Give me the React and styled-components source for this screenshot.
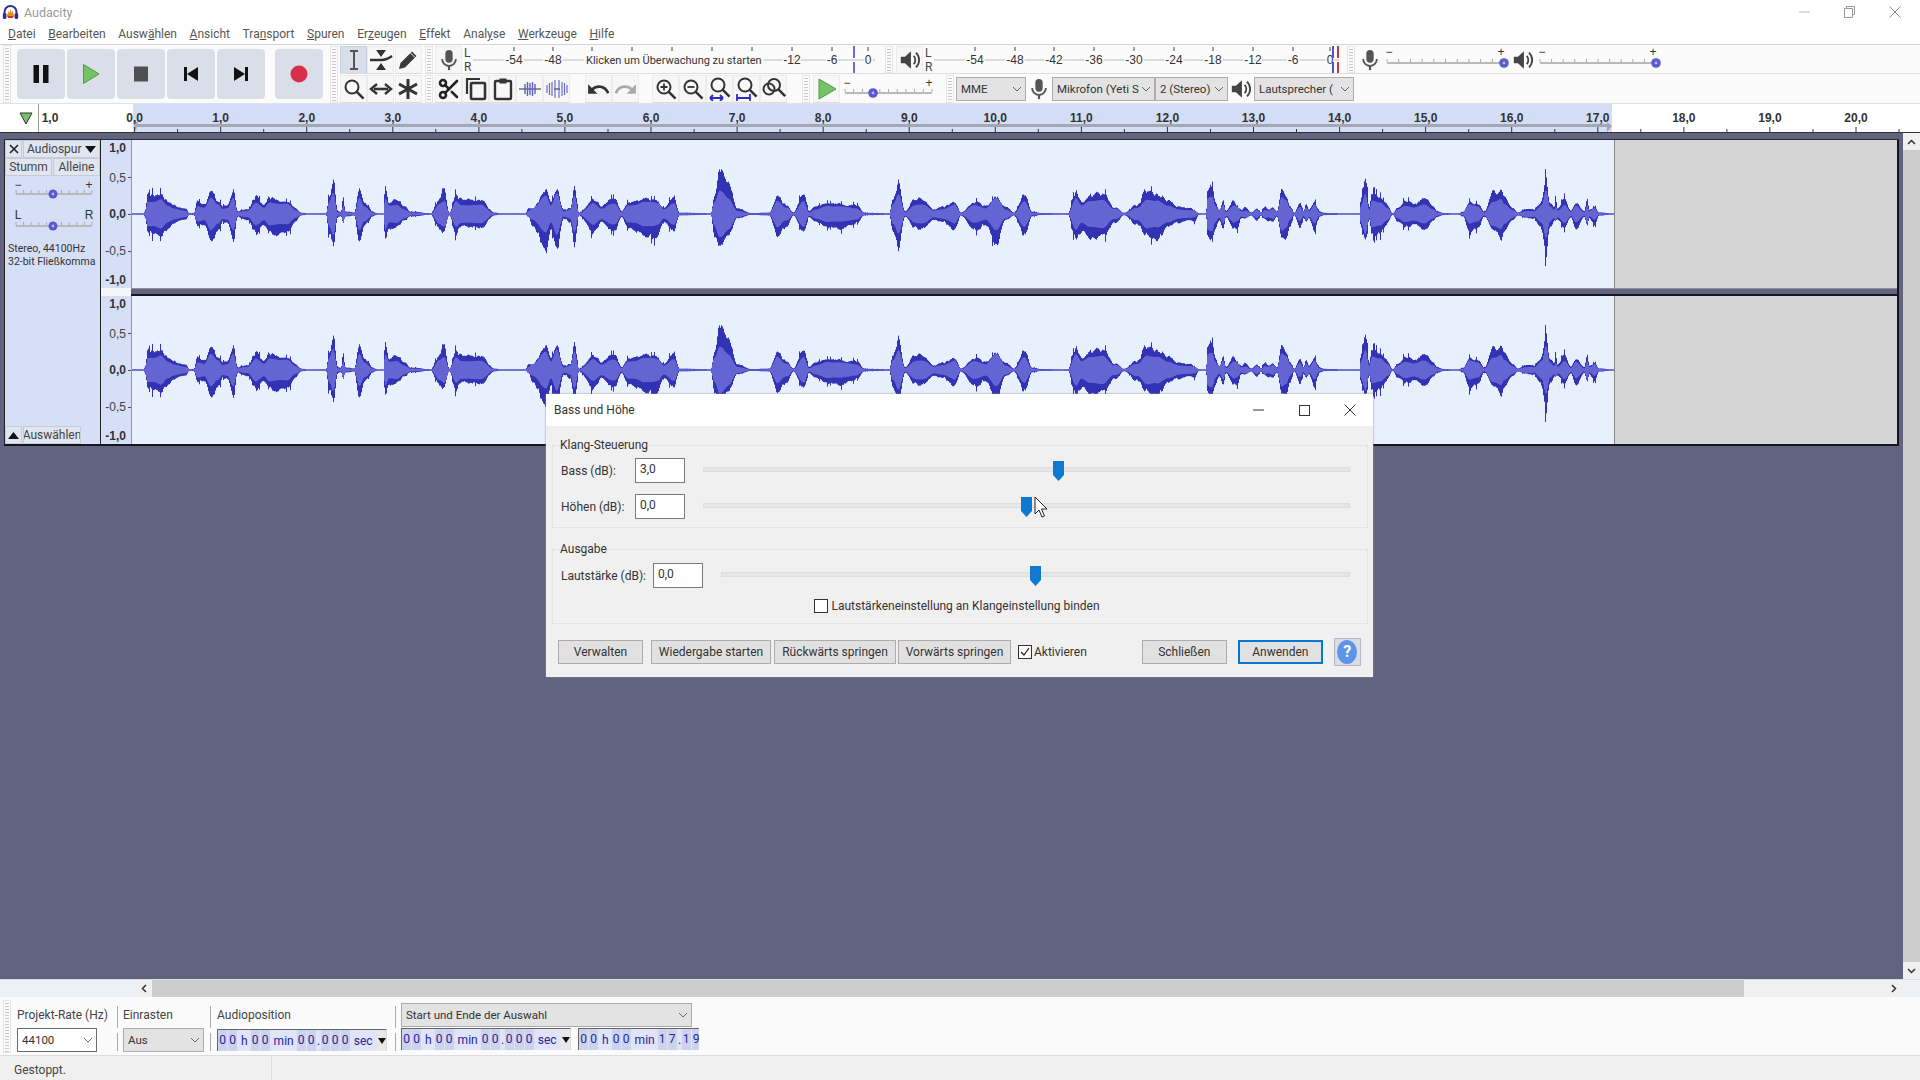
import { useMemo } from "react";
import styled, { createGlobalStyle } from "styled-components";
import { Scissors } from "lucide-react";
import { MdUndo, MdRedo } from "react-icons/md";

const GlobalStyle = createGlobalStyle`
  html, body { margin: 0; padding: 0; overflow: hidden; background: #62647f; }
  * { box-sizing: border-box; }
  body { font-family: Roboto, "Liberation Sans", sans-serif; font-size: 12px; color: #333; }
`;

const Page = styled.div`
  position: relative;
  width: 1920px;
  height: 1080px;
  display: flex;
  flex-direction: column;
  overflow: hidden;
`;

/* title + menu */
const TitleBar = styled.header`
  display: flex;
  flex: none;
  align-items: center;
  height: 24px;
  padding: 0 2px 0 2px;
  background: #fff;
  color: #9a9a9a;
  font-size: 12.5px;
`;
const TitleText = styled.span`
  margin-left: 5px;
`;
const WinButtons = styled.div`
  display: flex;
  margin-left: auto;
`;
const WinBtn = styled.div`
  width: ${(p) => p.$w || 45.5}px;
  height: 24px;
  display: flex;
  align-items: center;
  justify-content: center;
`;
const MenuBar = styled.nav`
  display: flex;
  flex: none;
  align-items: center;
  gap: 12.65px;
  height: 20px;
  padding-left: 8px;
  background: #fff;
  color: #555;
  font-size: 12px;
`;

/* top toolbars */
const Toolbars = styled.div`
  display: flex;
  flex: none;
  height: 60px;
  background: #fbfbfb;
  border-top: 1px solid #d4d4d4;
  border-bottom: 1px solid #e2e2e2;
`;
const Grip = styled.div`
  flex: none;
  width: 8px;
  margin-left: ${(p) => p.$ml || 0}px;
  border: 1px solid #e6e6e6;
  background: repeating-linear-gradient(to bottom, #c9c9c9 0 1px, transparent 1px 3px) 1px 2px / 4px 100% no-repeat;
`;
const Transport = styled.div`
  display: flex;
  flex: none;
  align-items: center;
  width: 330px;
  height: 100%;
  padding-left: 3px;
`;
const TransportGrip = styled(Grip)`
  align-self: stretch;
`;
const TransportBtn = styled.div`
  width: 48px;
  height: 50px;
  margin-left: ${(p) => p.$ml || 2}px;
  border-radius: 4px;
  background: #d9dee8;
  display: flex;
  align-items: center;
  justify-content: center;
`;
const ToolsGrid = styled.div`
  display: flex;
  flex: none;
  width: 94px;
  padding-top: 1px;
`;
const ToolCells = styled.div`
  display: grid;
  grid-template-columns: repeat(3, 27.3px);
  grid-template-rows: 28px 28px;
  row-gap: 1px;
  margin-left: 2px;
`;
const ToolBtn = styled.div`
  width: 27px;
  height: 28px;
  display: flex;
  align-items: center;
  justify-content: center;
  background: ${(p) => (p.$active ? "#d8dfeb" : "#f7f7f7")};
  border: 1px solid ${(p) => (p.$active ? "#c8cfdc" : "#ececec")};
  border-bottom-color: #dcdcdc;
  margin-left: ${(p) => p.$ml || 0}px;
  flex: none;
`;
const RightRows = styled.div`
  display: flex;
  flex-direction: column;
  flex: 1;
  margin-left: 1px;
`;
const BarRow = styled.div`
  display: flex;
  align-items: stretch;
  height: 29px;
  padding-top: 1px;
  border-bottom: ${(p) => (p.$last ? "none" : "1px solid #dedede")};
`;
const LR = styled.div`
  flex: none;
  width: ${(p) => p.$w}px;
  display: flex;
  flex-direction: column;
  justify-content: center;
  padding-left: 2px;
  color: #444;
  font-size: 12px;
  line-height: 14px;
`;
const IconSlot = styled.div`
  flex: none;
  width: ${(p) => p.$w}px;
  display: flex;
  align-items: center;
  justify-content: center;
`;
const Spacer = styled.div`
  flex: none;
  width: ${(p) => p.$w}px;
`;
const Combo = styled.div`
  flex: none;
  width: ${(p) => p.$w}px;
  height: 24px;
  margin-top: ${(p) => p.$mt ?? 2}px;
  display: flex;
  align-items: center;
  justify-content: space-between;
  gap: 1px;
  padding: 0 3px 0 4px;
  white-space: nowrap;
  overflow: hidden;
  background: ${(p) => (p.$white ? "#fff" : "#e3e3e3")};
  border: 1px solid ${(p) => (p.$white ? "#6c6c6c" : "#adadad")};
  color: #333;
  font-size: 11.5px;
`;
const ComboText = styled.span`
  overflow: hidden;
  flex: 1;
  min-width: 0;
`;
const MeterSvg = styled.svg`
  flex: none;
  display: block;
  text {
    font-family: "Liberation Sans", sans-serif;
    font-size: 12px;
    fill: #333;
    paint-order: stroke;
    stroke: #fbfbfb;
    stroke-width: 3px;
    text-anchor: middle;
  }
  text.msg {
    text-anchor: start;
    font-family: Roboto, sans-serif;
    font-size: 11px;
    stroke-width: 5px;
  }
`;
const SliderSvg = styled.svg`
  flex: none;
  display: block;
  text {
    font-family: "Liberation Sans", sans-serif;
    font-size: 12px;
    fill: #333;
    text-anchor: middle;
  }
`;

/* ruler */
const RulerSvg = styled.svg`
  display: block;
  flex: none;
  height: 29px;
  text {
    font-family: "Liberation Sans", sans-serif;
    font-size: 12px;
    font-weight: 700;
    fill: #333;
    text-anchor: middle;
  }
`;

/* work area */
const Workspace = styled.main`
  flex: 1;
  display: flex;
  background: #62647f;
  min-height: 0;
`;
const TrackArea = styled.div`
  flex: 1;
  padding: 6px 4px 0 4px;
`;
const Track = styled.div`
  display: flex;
  height: 307px;
  border-top: 1px solid #2b2b3a;
  border-bottom: 2px solid #15151f;
`;
const Panel = styled.aside`
  width: 97px;
  flex: none;
  display: flex;
  flex-direction: column;
  background: #d5dff6;
  border-left: 1px solid #222;
  border-right: 1px solid #222;
  font-size: 12px;
  color: #444;
`;
const PanelRow = styled.div`
  display: flex;
  height: 18px;
  gap: 1px;
`;
const PanelBtn = styled.div`
  flex: ${(p) => (p.$w ? `0 0 ${p.$w}px` : "1")};
  display: flex;
  align-items: center;
  justify-content: ${(p) => (p.$between ? "space-between" : "center")};
  padding: ${(p) => (p.$between ? "0 3px" : "0")};
  background: #e0e5ef;
  border: 1px solid #c6cbd6;
  white-space: nowrap;
  overflow: hidden;
`;
const PanelSliders = styled.div`
  padding-top: 2px;
  padding-left: 6px;
`;
const TrackInfo = styled.div`
  margin-top: 4px;
  padding-left: 3px;
  font-size: 10.5px;
  line-height: 13px;
  color: #333;
  white-space: nowrap;
`;
const PanelFoot = styled(PanelRow)`
  margin-top: auto;
`;
const Channels = styled.div`
  flex: 1;
  display: flex;
  flex-direction: column;
  border-right: 2px solid #15151f;
`;
const Channel = styled.div`
  display: flex;
  height: 148px;
`;
const VRulerSvg = styled.svg`
  flex: none;
  display: block;
  background: #d5dff6;
  border-right: 1px solid #8d97ad;
  text {
    font-family: "Liberation Sans", sans-serif;
    font-size: 12px;
    fill: #444;
    text-anchor: end;
  }
  text.bold {
    font-weight: 700;
    fill: #333;
  }
`;
const Wave = styled.svg`
  flex: none;
  display: block;
  background: #e8effd;
  border-right: 1px solid #8a8a8a;
`;
const DeadArea = styled.div`
  flex: 1;
  background: #d5d5d5;
`;
const ChannelGap = styled.div`
  height: 8px;
  display: flex;
  background: linear-gradient(#8d8f9d 0 1px, #62647f 1px 6px, #15151f 6px);
`;
const GapLeft = styled.div`
  width: 30px;
  background: #f4f6fc;
`;
const VScroll = styled.div`
  width: 17px;
  flex: none;
  display: flex;
  flex-direction: column;
  justify-content: space-between;
  background: #cdcdcd;
`;
const ScrollArrow = styled.div`
  width: ${(p) => p.$w || 17}px;
  height: 17px;
  flex: none;
  background: #f0f0f0;
  display: flex;
  align-items: center;
  justify-content: center;
`;

/* bottom */
const HScroll = styled.div`
  flex: none;
  height: 18px;
  display: flex;
  background: #eef0f8;
  border-top: 1px solid #d8dbe8;
`;
const HPad = styled.div`
  width: ${(p) => p.$w}px;
  flex: none;
`;
const HThumb = styled.div`
  width: 1592px;
  background: #cdcdcd;
`;
const HTrack = styled.div`
  flex: 1;
  background: #f0f0f0;
`;
const SelectionBar = styled.section`
  flex: none;
  height: 59px;
  display: flex;
  background: #fbfbfb;
  border-bottom: 1px solid #dcdcdc;
  padding: 6px 0 2px 3px;
`;
const SelectionGrip = styled(Grip)`
  margin-top: -3px;
`;
const SelCol = styled.div`
  flex: none;
  width: ${(p) => p.$w}px;
  margin-left: ${(p) => p.$ml}px;
  display: flex;
  flex-direction: column;
`;
const SelLabel = styled.div`
  height: 25px;
  line-height: 24px;
  color: #444;
  font-size: 12px;
  white-space: nowrap;
`;
const SelSep = styled.div`
  flex: none;
  align-self: stretch;
  margin: 3px 0 2px ${(p) => p.$ml}px;
  width: 1px;
  background: linear-gradient(#aaa 0 22px, transparent 22px 27px, #aaa 27px);
`;
const TimeRow = styled.div`
  display: flex;
  gap: 7px;
  margin-top: 1px;
`;
const TimeBox = styled.div`
  flex: none;
  width: ${(p) => p.$w}px;
  height: 22px;
  margin-top: ${(p) => p.$mt || 0}px;
  display: flex;
  align-items: center;
  overflow: hidden;
  white-space: nowrap;
  background: #e0e4f6;
  border-top: 1px solid #666;
  border-left: 1px solid #666;
  border-right: ${(p) => (p.$plain ? "none" : "1px solid #ddd")};
  color: #24249a;
  font-size: 12px;
`;
const Digit = styled.span`
  flex: none;
  width: 10px;
  height: 100%;
  line-height: 20px;
  text-align: center;
  background: #cdd3ec;
  border-right: 1px solid #e0e4f6;
`;
const Unit = styled.span`
  flex: none;
  padding: 0 3px;
`;
const Dot = styled.span`
  flex: none;
  width: 4px;
  text-align: center;
`;
const TimeArrow = styled.span`
  flex: none;
  margin-left: auto;
  width: 9px;
  height: 100%;
  background: #e8e8e8;
  display: flex;
  align-items: center;
  justify-content: center;
`;
const StatusBar = styled.footer`
  flex: none;
  height: 24px;
  display: flex;
  background: #f0f0f0;
  color: #444;
  font-size: 12px;
`;
const StatusCell = styled.div`
  width: 272px;
  padding: 7px 0 0 14px;
  border-right: 1px solid #dcdcdc;
`;

/* dialog */
const Dialog = styled.div`
  position: absolute;
  left: 546px;
  top: 394px;
  width: 827px;
  height: 283px;
  background: #f0f0f0;
  box-shadow: 0 0 2px #8b8b99;
  display: flex;
  flex-direction: column;
  color: #333;
  font-size: 12px;
`;
const DialogTitle = styled.div`
  flex: none;
  height: 32px;
  display: flex;
  align-items: center;
  padding-left: 8px;
  background: #fff;
  font-size: 12px;
`;
const DialogBody = styled.div`
  flex: 1;
  display: flex;
  flex-direction: column;
  padding: 11px 5px 0 6px;
`;
const Group = styled.fieldset`
  margin: 0 0 ${(p) => p.$mb || 0}px;
  padding: ${(p) => p.$pt}px 17px ${(p) => p.$pb}px 8px;
  border: 1px solid #e3e3e3;
  display: flex;
  flex-direction: column;
  gap: 11px;
  min-width: 0;
`;
const Legend = styled.legend`
  padding: 0;
  margin-left: -1px;
  height: 16px;
  line-height: 16px;
  font-size: 12px;
`;
const FieldRow = styled.div`
  display: flex;
  align-items: center;
  height: 25px;
`;
const FieldLabel = styled.label`
  flex: none;
  width: ${(p) => p.$w}px;
`;
const NumberInput = styled.input`
  flex: none;
  width: 50px;
  height: 25px;
  padding: 0 0 3px 4px;
  border: 1px solid #7a7a7a;
  background: #fff;
  font: inherit;
  color: #333;
  outline: none;
`;
const SliderTrack = styled.div`
  position: relative;
  flex: 1;
  height: 5px;
  margin-left: 18px;
  margin-top: -3px;
  background: #e6e6e6;
  border: 1px solid #dedede;
`;
const Thumb = styled.svg`
  position: absolute;
  left: ${(p) => p.$pos}%;
  top: -7px;
  margin-left: -5.5px;
`;
const BindRow = styled.div`
  display: flex;
  align-items: center;
  justify-content: center;
  gap: 3px;
  height: 14px;
  margin-left: 3px;
`;
const CheckBox = styled.div`
  flex: none;
  width: 14px;
  height: 14px;
  background: #fff;
  border: 1px solid #333;
  display: flex;
  align-items: center;
  justify-content: center;
`;
const ButtonRow = styled.div`
  display: flex;
  align-items: center;
  height: 28px;
  margin-top: 14px;
  padding-left: 6px;
`;
const DlgButton = styled.button`
  flex: none;
  width: ${(p) => p.$w}px;
  height: 24px;
  margin-left: ${(p) => p.$ml || 0}px;
  padding: 0;
  background: #e1e1e1;
  border: ${(p) => (p.$primary ? "2px solid #0078d7" : "1px solid #adadad")};
  font: inherit;
  color: #333;
`;
const CheckLabel = styled.div`
  display: flex;
  align-items: center;
  gap: 2px;
  margin-left: 7px;
`;
const HelpBtn = styled.div`
  flex: none;
  width: 27px;
  height: 28px;
  margin-left: 11px;
  background: #d9dde6;
  border: 1px solid #b4b8c2;
  display: flex;
  align-items: center;
  justify-content: center;
`;
const HelpDot = styled.div`
  width: 20px;
  height: 24px;
  border-radius: 50%;
  background: #5c95e8;
  color: #fff;
  font-size: 16px;
  font-weight: 700;
  text-align: center;
  line-height: 24px;
`;
const Cursor = styled.svg`
  position: absolute;
  left: 1034px;
  top: 496px;
`;

/* drawings */
const Chevron = ({ color = "#666" }) => (
  <svg width="10" height="6" viewBox="0 0 10 6" style={{ flex: "none" }}>
    <path d="M1 1l4 4 4-4" fill="none" stroke={color} strokeWidth="1" />
  </svg>
);

const AppLogo = () => (
  <svg width="17" height="17" viewBox="0 0 17 17">
    <path d="M2.5 11V8a6 6 0 0 1 12 0v3" fill="none" stroke="#2b2f8f" strokeWidth="2" />
    <path d="M4.5 11l1-1 1-3 1 2 1-4 1 4 1-2 1 3 1 1-2 3h-4z" fill="#f08a1c" />
    <path d="M5 12h7l-1.5 2h-4z" fill="#d5332a" />
    <rect x="0.8" y="9" width="3.6" height="6" rx="1.5" fill="#2b2f8f" />
    <rect x="12.6" y="9" width="3.6" height="6" rx="1.5" fill="#2b2f8f" />
  </svg>
);

const TransportIcon = ({ kind }) => {
  const box = { width: 24, height: 24, viewBox: "0 0 24 24" };
  if (kind === "pause")
    return (
      <svg {...box}>
        <rect x="4.5" y="3" width="5.5" height="18" fill="#111" />
        <rect x="14" y="3" width="5.5" height="18" fill="#111" />
      </svg>
    );
  if (kind === "play")
    return (
      <svg {...box}>
        <path d="M4.5 2.5L20 12 4.5 21.5z" fill="#74c365" stroke="#4e9a45" strokeWidth="1" />
      </svg>
    );
  if (kind === "stop")
    return (
      <svg {...box}>
        <rect x="5" y="4.5" width="14" height="15" fill="#4d4f53" />
      </svg>
    );
  if (kind === "start")
    return (
      <svg {...box}>
        <rect x="5" y="5" width="3" height="14" fill="#111" />
        <path d="M19 5v14L8 12z" fill="#111" />
      </svg>
    );
  if (kind === "end")
    return (
      <svg {...box}>
        <rect x="16" y="5" width="3" height="14" fill="#111" />
        <path d="M5 5v14l11-7z" fill="#111" />
      </svg>
    );
  return (
    <svg {...box}>
      <circle cx="12" cy="12" r="8.5" fill="#d9304a" />
    </svg>
  );
};

const Mic = ({ color = "#555", size = 22 }) => (
  <svg width={size} height={size} viewBox="0 0 24 24">
    <rect x="8" y="1" width="8" height="14" rx="4" fill={color} />
    <path d="M4.5 11a7.5 7.5 0 0 0 15 0" fill="none" stroke={color} strokeWidth="2" />
    <path d="M12 18.5V23" stroke={color} strokeWidth="2.4" />
  </svg>
);

const Speaker = ({ size = 22 }) => (
  <svg width={size} height={size} viewBox="0 0 24 24">
    <path d="M2 8.5v7h4.5l6.5 6V2.5l-6.5 6z" fill="#444" />
    <path d="M16 7.5a6.5 6.5 0 0 1 0 9M18.5 4a11 11 0 0 1 0 16" fill="none" stroke="#444" strokeWidth="2" />
  </svg>
);

const Lens = ({ children, dark = "#333", cx = 10, cy = 10, r = 6.5 }) => (
  <>
    <circle cx={cx} cy={cy} r={r} fill="none" stroke={dark} strokeWidth="2" />
    <path d={`M${cx + r * 0.7} ${cy + r * 0.7}L${cx + r * 0.7 + 7} ${cy + r * 0.7 + 7}`} stroke={dark} strokeWidth="2.6" />
    {children}
  </>
);

const ToolIcon = ({ kind }) => {
  const p = { width: 24, height: 24, viewBox: "0 0 24 24" };
  switch (kind) {
    case "ibeam":
      return (
        <svg {...p}>
          <path d="M8 3h8M8 21h8M12 3v18" stroke="#555" strokeWidth="2" fill="none" />
        </svg>
      );
    case "envelope":
      return (
        <svg {...p}>
          <path d="M7 2h10l-5 7zM7 22h10l-5-7z" fill="#333" />
          <path d="M1 12h11c4 0 7-1 11-4" stroke="#333" strokeWidth="2.4" fill="none" />
        </svg>
      );
    case "pencil":
      return (
        <svg {...p}>
          <path d="M3 21l1.5-6L16 3.5l4.5 4.5L9 19.5z" fill="#3a3a3a" />
          <path d="M14.5 5l4.5 4.5" stroke="#f7f7f7" strokeWidth="1" />
        </svg>
      );
    case "zoom":
      return (
        <svg {...p}>
          <Lens />
        </svg>
      );
    case "shift":
      return (
        <svg {...p}>
          <path d="M5 12h14" stroke="#333" strokeWidth="2.6" />
          <path d="M8 7l-6 5 6 5M16 7l6 5-6 5" fill="none" stroke="#333" strokeWidth="2.4" />
        </svg>
      );
    case "multi":
      return (
        <svg {...p}>
          <path d="M12 2v20M3 7l18 10M21 7L3 17" stroke="#333" strokeWidth="3" />
        </svg>
      );
    case "cut":
      return <Scissors size={24} color="#222" strokeWidth={2.6} />;
    case "copy":
      return (
        <svg {...p}>
          <path d="M3 17V2h13" fill="none" stroke="#333" strokeWidth="2.2" />
          <rect x="7" y="6" width="14" height="16" rx="1" fill="none" stroke="#333" strokeWidth="2.6" />
        </svg>
      );
    case "paste":
      return (
        <svg {...p}>
          <rect x="4" y="4" width="16" height="18" rx="1" fill="none" stroke="#333" strokeWidth="2.4" />
          <rect x="8.5" y="1.5" width="7" height="5" fill="#333" />
        </svg>
      );
    case "trim":
      return (
        <svg {...p}>
          <path d="M1 12h22" stroke="#666" strokeWidth="1.4" />
          <path d="M7 7v10M9.5 5v14M12 6v12M14.5 5v14M17 7v10" stroke="#5f5fc8" strokeWidth="1.4" />
        </svg>
      );
    case "silence":
      return (
        <svg {...p}>
          <path d="M9 12h6" stroke="#555" strokeWidth="1.4" />
          <path d="M2 8v8M4.5 6v12M7 5v14M10 3v18M14 3v18M17 5v14M19.5 6v12M22 8v8" stroke="#6a6ad2" strokeWidth="1.2" />
        </svg>
      );
    case "zoomin":
      return (
        <svg {...p}>
          <Lens>
            <path d="M6.5 10h7M10 6.5v7" stroke="#333" strokeWidth="1.8" />
          </Lens>
        </svg>
      );
    case "zoomout":
      return (
        <svg {...p}>
          <Lens>
            <path d="M6.5 10h7" stroke="#333" strokeWidth="1.8" />
          </Lens>
        </svg>
      );
    case "fitsel":
      return (
        <svg {...p}>
          <Lens cx={10} cy={8} r={6.5} />
          <path d="M2 21h13M2 21l3-3M2 21l3 3M15 21l-3-3M15 21l-3 3" stroke="#2a2ac0" strokeWidth="1.8" fill="none" />
        </svg>
      );
    case "fitproj":
      return (
        <svg {...p}>
          <Lens cx={10} cy={8} r={6.5} />
          <path d="M2 21h13M2 17v7M15 17v7" stroke="#2a2ac0" strokeWidth="1.8" fill="none" />
        </svg>
      );
    default:
      return (
        <svg {...p}>
          <circle cx="7" cy="12" r="5.5" fill="none" stroke="#333" strokeWidth="2" />
          <Lens cx={12} cy={8} r={6} />
        </svg>
      );
  }
};

const SmallPlay = () => (
  <svg width="24" height="24" viewBox="0 0 24 24">
    <path d="M4 2l17 10L4 22z" fill="#74c365" stroke="#4e9a45" strokeWidth="1" />
  </svg>
);

const Meter = ({ width, height = 27, ticks, labels, marks, message }) => (
  <MeterSvg width={width} height={height}>
    <path d={`M0 14H${width}`} stroke="#bcbcbc" strokeWidth="1" />
    {ticks.map((t) => (
      <path key={t} d={`M${t} 1v4`} stroke="#444" strokeWidth="1" />
    ))}
    {labels.map(([x, s]) => (
      <text key={s} x={x} y="18">
        {s}
      </text>
    ))}
    {message && (
      <text className="msg" x="113" y="18">
        {message}
      </text>
    )}
    {marks.map(([x, c]) => (
      <path key={x} d={`M${x} 0V12M${x} 16V27`} stroke={c} strokeWidth="2" />
    ))}
  </MeterSvg>
);

const TickSlider = ({ width, height, x0, x1, y, thumb, topY, left = "−", right = "+", ticks = 10, r = 4.8 }) => {
  const step = (x1 - x0) / ticks;
  return (
    <SliderSvg width={width} height={height}>
      <text x={x0 + 2} y={topY}>
        {left}
      </text>
      <text x={x1 - 3} y={topY}>
        {right}
      </text>
      <path d={`M${x0} ${y}H${x1}`} stroke="#b9b9b9" strokeWidth="2" />
      {Array.from({ length: ticks + 1 }, (_, i) => (
        <path key={i} d={`M${x0 + i * step} ${y - 4}v3`} stroke="#aaa" strokeWidth="1" />
      ))}
      <circle cx={thumb} cy={y} r={r} fill="#5a5ad0" />
      <circle cx={thumb} cy={y} r="1.4" fill="#b9b9ee" />
    </SliderSvg>
  );
};

/* amplitude outline per audio part, measured on screen: [offset, up, down] */
const ENVELOPES = [
  { from: 0, scale: 3, pts: [[393, 1, 1], [428, 2, 2], [433, 15, 15], [440, 68, 60], [460, 62, 65], [480, 70, 78], [500, 42, 50], [520, 28, 30], [555, 20, 20], [565, 3, 3], [578, 3, 3], [590, 45, 40], [610, 30, 35], [630, 75, 85], [650, 45, 60], [665, 25, 25], [680, 30, 30], [697, 80, 90], [710, 10, 10], [740, 15, 20], [765, 65, 70], [790, 30, 35], [805, 55, 60], [830, 45, 70], [860, 45, 65], [885, 20, 25], [900, 5, 5], [920, 2, 2], [975, 2, 2], [985, 60, 70], [997, 122, 115], [1010, 10, 10], [1020, 8, 8], [1027, 60, 30], [1033, 10, 10], [1040, 8, 8], [1060, 5, 5], [1075, 85, 95], [1090, 40, 40], [1115, 8, 8], [1130, 2, 2], [1148, 2, 2], [1152, 95, 85], [1165, 40, 55], [1185, 50, 45], [1210, 30, 25], [1230, 8, 8], [1290, 2, 2], [1315, 60, 60], [1330, 90, 60], [1345, 5, 5], [1365, 65, 70], [1380, 50, 40], [1440, 45, 45], [1480, 5, 5], [1500, 2, 2]] },
  { from: 500, scale: 2.24, pts: [[0, 2, 2], [55, 2, 2], [62, 20, 10], [70, 18, 40], [100, 85, 130], [112, 40, 50], [125, 85, 125], [140, 15, 15], [155, 20, 30], [165, 85, 100], [175, 5, 5], [205, 50, 65], [225, 30, 30], [255, 55, 60], [270, 10, 10], [285, 40, 50], [320, 50, 70], [350, 50, 90], [365, 20, 25], [388, 55, 55], [400, 5, 5], [470, 2, 2], [478, 60, 80], [490, 160, 115], [510, 95, 65], [530, 20, 15], [560, 3, 3], [600, 5, 5], [620, 65, 80], [640, 30, 45], [655, 5, 5], [678, 80, 70], [690, 10, 10], [705, 25, 25], [740, 40, 50], [770, 35, 55], [795, 35, 35], [815, 5, 5], [870, 2, 2], [878, 50, 60], [890, 105, 115], [905, 10, 10], [925, 50, 45], [945, 55, 55], [970, 15, 20], [990, 25, 25], [1015, 45, 60], [1030, 5, 5], [1060, 40, 55], [1085, 30, 40], [1110, 60, 110], [1130, 25, 20], [1150, 5, 5], [1172, 75, 80], [1190, 8, 8], [1210, 3, 3], [1270, 2, 2], [1288, 80, 90], [1300, 40, 60], [1320, 70, 95], [1345, 80, 85], [1375, 25, 35], [1395, 5, 5], [1425, 30, 35], [1445, 80, 70], [1470, 70, 95], [1495, 45, 40], [1520, 25, 30]] },
  { from: 1190, scale: 3, pts: [[0, 20, 20], [10, 10, 25], [25, 2, 2], [45, 2, 2], [50, 85, 80], [65, 90, 80], [72, 40, 50], [85, 15, 25], [97, 45, 50], [105, 10, 10], [128, 50, 55], [140, 25, 55], [150, 15, 15], [165, 25, 15], [180, 5, 5], [198, 20, 25], [210, 5, 5], [222, 30, 20], [232, 15, 25], [245, 25, 30], [258, 10, 10], [272, 90, 85], [285, 60, 85], [297, 25, 40], [310, 5, 5], [327, 40, 50], [338, 10, 15], [345, 40, 30], [355, 15, 15], [370, 38, 55], [385, 10, 10], [400, 4, 4], [435, 3, 3], [445, 1, 1], [505, 1, 1], [510, 60, 50], [523, 143, 105], [535, 25, 20], [543, 75, 75], [565, 60, 70], [590, 30, 30], [605, 3, 3], [620, 20, 25], [640, 40, 40], [680, 40, 40], [705, 55, 55], [725, 30, 25], [740, 8, 8], [760, 3, 3], [800, 1, 1], [815, 8, 8], [835, 40, 65], [860, 35, 50], [880, 8, 8], [905, 75, 50], [930, 75, 80]] },
  { from: 1500, scale: 3, pts: [[10, 50, 50], [35, 20, 20], [50, 5, 5], [75, 20, 15], [100, 15, 15], [122, 50, 60], [135, 125, 145], [147, 40, 50], [160, 25, 25], [163, 70, 25], [170, 20, 20], [190, 50, 45], [210, 10, 10], [225, 35, 50], [250, 10, 10], [259, 60, 45], [265, 15, 15], [280, 25, 40], [295, 5, 5], [340, 1, 1]] },
];

const WAVE_LEFT = 131;
const WAVE_WIDTH = 1482;
const WAVE_CENTER = 74;

function buildEnvelope() {
  const all = [];
  ENVELOPES.forEach((part, i) => {
    const next = ENVELOPES[i + 1];
    part.pts.forEach(([v, up, down]) => {
      const x = part.from + v / part.scale;
      if (next && x >= next.from + next.pts[0][0] / next.scale) return;
      all.push([x, up / 3, down / 3]);
    });
  });
  return all;
}

function buildWave(seed) {
  const env = buildEnvelope();
  let state = seed;
  const rnd = () => {
    state = (state * 16807) % 2147483647;
    return state / 2147483647;
  };
  // slow wobble so the outline gets bumps instead of straight slopes
  const wobble = (period) => {
    const knots = Array.from({ length: Math.ceil(WAVE_WIDTH / period) + 2 }, rnd);
    return (i) => {
      const pos = i / period;
      const k0 = Math.floor(pos);
      return knots[k0] + (knots[k0 + 1] - knots[k0]) * (pos - k0);
    };
  };
  const slow = wobble(7);
  const fast = wobble(2);
  let peak = "";
  let rms = "";
  let k = 0;
  for (let i = 0; i < WAVE_WIDTH; i += 1) {
    const x = WAVE_LEFT + i + 0.5;
    while (k < env.length - 2 && env[k + 1][0] < x) k += 1;
    const [x0, u0, d0] = env[k];
    const [x1, u1, d1] = env[k + 1];
    const raw = Math.max(0, Math.min(1, (x - x0) / (x1 - x0)));
    // steeper flanks, flatter tops: speech blocks rather than diamonds
    const t = raw * raw * (3 - 2 * raw);
    const up = u0 + (u1 - u0) * t;
    const down = d0 + (d1 - d0) * t;
    const shape = 0.62 + 0.2 * slow(i) + 0.22 * fast(i);
    const spike = rnd() > 0.93 ? 1.28 : 1;
    const a = Math.max(0.6, up * (shape + rnd() * 0.06) * spike);
    const b = Math.max(0.6, down * (shape + rnd() * 0.06) * spike);
    const r = Math.min(a, b, ((up + down) / 2) * (0.46 + 0.16 * slow(i)));
    peak += `M${i + 0.5} ${(WAVE_CENTER - a).toFixed(1)}V${(WAVE_CENTER + b).toFixed(1)}`;
    rms += `M${i + 0.5} ${(WAVE_CENTER - r).toFixed(1)}V${(WAVE_CENTER + r).toFixed(1)}`;
  }
  return { peak, rms };
}

const Waveform = ({ seed }) => {
  const { peak, rms } = useMemo(() => buildWave(seed), [seed]);
  return (
    <Wave width={WAVE_WIDTH + 1} height="148">
      <path d={peak} stroke="#3232b4" strokeWidth="1" fill="none" />
      <path d={rms} stroke="#6464d2" strokeWidth="1" fill="none" />
    </Wave>
  );
};

const VRuler = () => (
  <VRulerSvg width="31" height="148">
    <text className="bold" x="25" y="12">1,0</text>
    <text x="25" y="42">0,5</text>
    <text className="bold" x="25" y="78">0,0</text>
    <text x="25" y="115">-0,5</text>
    <text className="bold" x="25" y="144">-1,0</text>
    <path d="M27 37.5h3M27 74.5h3M27 111.5h3" stroke="#555" />
  </VRulerSvg>
);

const TimeRuler = () => {
  const origin = 134.6;
  const step = 86.07;
  const marks = Array.from({ length: 42 }, (_, i) => i / 2);
  return (
    <RulerSvg width="1920">
      <rect width="1920" height="29" fill="#fff" />
      <rect x="133" width="1479" height="28" fill="#d3ddf6" />
      <path d="M26 20L20 9h12z" fill="#74c365" stroke="#333" strokeWidth="1" />
      <path d="M38.5 0v28" stroke="#999" />
      <text x="50" y="18">1,0</text>
      <rect x="135" y="20" width="1472" height="3" fill="#a4a8b4" />
      <path d="M1607 18l5 4-5 6zM133 18l5 0-2 9z" fill="#a4a8b4" />
      {marks.map((t) => {
        const x = origin + t * step;
        const major = Number.isInteger(t);
        return (
          <g key={t}>
            <path d={`M${x.toFixed(1)} ${major ? 23 : 25}V28`} stroke="#333" strokeWidth="1" />
            {major && (
              <text x={x} y="18">{`${t},0`}</text>
            )}
          </g>
        );
      })}
      <path d="M0 28.5H1920" stroke="#333" />
    </RulerSvg>
  );
};

const TimeValue = ({ w, mt, groups, arrow = true, plain }) => (
  <TimeBox $w={w} $mt={mt} $plain={plain}>
    {groups.map((g, i) =>
      g.unit ? (
        <Unit key={i}>{g.unit}</Unit>
      ) : g.dot ? (
        <Dot key={i}>.</Dot>
      ) : (
        <Digit key={i}>{g.d}</Digit>
      )
    )}
    {arrow && (
      <TimeArrow>
        <svg width="8" height="6" viewBox="0 0 8 6">
          <path d="M0 0h8L4 6z" fill="#111" />
        </svg>
      </TimeArrow>
    )}
  </TimeBox>
);

const timeGroups = (a, b, c, d) => [
  ...a.split("").map((x) => ({ d: x })),
  { unit: "h" },
  ...b.split("").map((x) => ({ d: x })),
  { unit: "min" },
  ...c.split("").map((x) => ({ d: x })),
  { dot: true },
  ...d.split("").map((x) => ({ d: x })),
  { unit: "sec" },
];

const Check = () => (
  <svg width="12" height="12" viewBox="0 0 12 12">
    <path d="M2 6l3 3 5-7" fill="none" stroke="#222" strokeWidth="1.2" />
  </svg>
);

const DlgThumb = ({ pos }) => (
  <Thumb $pos={pos} width="11" height="20" viewBox="0 0 11 20">
    <path d="M0 0h11v14l-5.5 6L0 14z" fill="#0f78cf" />
  </Thumb>
);

const MENU = [
  ["", "D", "atei"],
  ["", "B", "earbeiten"],
  ["Ausw", "ä", "hlen"],
  ["", "A", "nsicht"],
  ["Tra", "n", "sport"],
  ["", "S", "puren"],
  ["Er", "z", "eugen"],
  ["", "E", "ffekt"],
  ["Anal", "y", "se"],
  ["", "W", "erkzeuge"],
  ["", "H", "ilfe"],
];

const RECORD_TICKS = [41, 80, 119, 159, 199, 239, 279, 319, 359, 395];
const PLAY_TICKS = [41, 81, 120, 160, 200, 240, 279, 319, 359, 396];
const PLAY_LABELS = ["-54", "-48", "-42", "-36", "-30", "-24", "-18", "-12", "-6", "0"];

export default function App() {
  return (
    <Page>
      <GlobalStyle />
      <TitleBar>
        <AppLogo />
        <TitleText>Audacity</TitleText>
        <WinButtons>
          <WinBtn>
            <svg width="11" height="2"><path d="M0 1h11" stroke="#bbb" /></svg>
          </WinBtn>
          <WinBtn>
            <svg width="11" height="12"><path d="M2.5 2.5V.5h8v8h-2M.5 2.5h8v9h-8z" fill="none" stroke="#999" /></svg>
          </WinBtn>
          <WinBtn>
            <svg width="12" height="12"><path d="M.5.5l11 11M11.5.5l-11 11" stroke="#888" /></svg>
          </WinBtn>
        </WinButtons>
      </TitleBar>
      <MenuBar>
        {MENU.map(([a, u, b]) => (
          <span key={a + u + b}>
            {a}
            <u>{u}</u>
            {b}
          </span>
        ))}
      </MenuBar>

      <Toolbars>
        <Transport>
          <TransportGrip />
          <TransportBtn $ml={6}><TransportIcon kind="pause" /></TransportBtn>
          <TransportBtn><TransportIcon kind="play" /></TransportBtn>
          <TransportBtn><TransportIcon kind="stop" /></TransportBtn>
          <TransportBtn><TransportIcon kind="start" /></TransportBtn>
          <TransportBtn><TransportIcon kind="end" /></TransportBtn>
          <TransportBtn $ml={10}><TransportIcon kind="record" /></TransportBtn>
        </Transport>
        <ToolsGrid>
          <Grip />
          <ToolCells>
            <ToolBtn $active><ToolIcon kind="ibeam" /></ToolBtn>
            <ToolBtn><ToolIcon kind="envelope" /></ToolBtn>
            <ToolBtn><ToolIcon kind="pencil" /></ToolBtn>
            <ToolBtn><ToolIcon kind="zoom" /></ToolBtn>
            <ToolBtn><ToolIcon kind="shift" /></ToolBtn>
            <ToolBtn><ToolIcon kind="multi" /></ToolBtn>
          </ToolCells>
        </ToolsGrid>
        <RightRows>
          <BarRow>
            <Grip />
            <ToolBtn $ml={2}><Mic /></ToolBtn>
            <LR $w={11}><span>L</span><span>R</span></LR>
            <Meter
              width={402}
              ticks={RECORD_TICKS}
              labels={[[41, "-54"], [80, "-48"], [319, "-12"], [359, "-6"], [395, "0"]]}
              marks={[[381, "#6a6ad2"]]}
              message="Klicken um Überwachung zu starten"
            />
            <Spacer $w={10} />
            <Grip />
            <ToolBtn $ml={3}><Speaker /></ToolBtn>
            <LR $w={11}><span>L</span><span>R</span></LR>
            <Meter
              width={405}
              ticks={PLAY_TICKS}
              labels={PLAY_TICKS.map((x, i) => [x, PLAY_LABELS[i]])}
              marks={[[399, "#5252c8"], [404, "#c8324a"]]}
            />
            <Spacer $w={8} />
            <Grip />
            <IconSlot $w={29}><Mic /></IconSlot>
            <TickSlider width={125} height={27} x0={3} x1={120} y={17} thumb={120} topY={10} />
            <IconSlot $w={28}><Speaker /></IconSlot>
            <TickSlider width={125} height={27} x0={3} x1={119} y={17} thumb={119} topY={10} />
          </BarRow>
          <BarRow $last>
            <Grip />
            <ToolBtn $ml={2}><ToolIcon kind="cut" /></ToolBtn>
            <ToolBtn><ToolIcon kind="copy" /></ToolBtn>
            <ToolBtn><ToolIcon kind="paste" /></ToolBtn>
            <ToolBtn><ToolIcon kind="trim" /></ToolBtn>
            <ToolBtn><ToolIcon kind="silence" /></ToolBtn>
            <ToolBtn $ml={15}><MdUndo size={25} color="#333" /></ToolBtn>
            <ToolBtn><MdRedo size={25} color="#aaa" /></ToolBtn>
            <ToolBtn $ml={13}><ToolIcon kind="zoomin" /></ToolBtn>
            <ToolBtn><ToolIcon kind="zoomout" /></ToolBtn>
            <ToolBtn><ToolIcon kind="fitsel" /></ToolBtn>
            <ToolBtn><ToolIcon kind="fitproj" /></ToolBtn>
            <ToolBtn><ToolIcon kind="toggle" /></ToolBtn>
            <Spacer $w={15} />
            <Grip />
            <ToolBtn $ml={3}><SmallPlay /></ToolBtn>
            <TickSlider width={97} height={27} x0={5} x1={92} y={18} thumb={33} topY={12} />
            <Spacer $w={9} />
            <Grip />
            <Spacer $w={2} />
            <Combo $w={70}><ComboText>MME</ComboText><Chevron /></Combo>
            <IconSlot $w={26}><Mic /></IconSlot>
            <Combo $w={103}><ComboText>Mikrofon (Yeti S</ComboText><Chevron /></Combo>
            <Combo $w={73}><ComboText>2 (Stereo)</ComboText><Chevron /></Combo>
            <IconSlot $w={26}><Speaker /></IconSlot>
            <Combo $w={100}><ComboText>Lautsprecher (</ComboText><Chevron /></Combo>
          </BarRow>
        </RightRows>
      </Toolbars>

      <TimeRuler />

      <Workspace>
        <TrackArea>
          <Track>
            <Panel>
              <PanelRow>
                <PanelBtn $w={17}>
                  <svg width="10" height="10"><path d="M1 1l8 8M9 1l-8 8" stroke="#222" strokeWidth="1.6" /></svg>
                </PanelBtn>
                <PanelBtn $between>
                  Audiospur
                  <svg width="11" height="7"><path d="M0 0h11L5.5 7z" fill="#111" /></svg>
                </PanelBtn>
              </PanelRow>
              <PanelRow>
                <PanelBtn>Stumm</PanelBtn>
                <PanelBtn>Alleine</PanelBtn>
              </PanelRow>
              <PanelSliders>
                <TickSlider width={84} height={30} x0={5} x1={81} y={16} thumb={42} topY={11} r={4.5} />
                <TickSlider width={84} height={30} x0={5} x1={81} y={18} thumb={42} topY={11} left="L" right="R" r={4.5} />
              </PanelSliders>
              <TrackInfo>
                Stereo, 44100Hz
                <br />
                32-bit Fließkomma
              </TrackInfo>
              <PanelFoot>
                <PanelBtn $w={17}>
                  <svg width="11" height="7"><path d="M0 7h11L5.5 0z" fill="#111" /></svg>
                </PanelBtn>
                <PanelBtn $w={58}>Auswählen</PanelBtn>
              </PanelFoot>
            </Panel>
            <Channels>
              <Channel>
                <VRuler />
                <Waveform seed={4711} />
                <DeadArea />
              </Channel>
              <ChannelGap><GapLeft /></ChannelGap>
              <Channel>
                <VRuler />
                <Waveform seed={4711} />
                <DeadArea />
              </Channel>
            </Channels>
          </Track>
        </TrackArea>
        <VScroll>
          <ScrollArrow>
            <svg width="9" height="6"><path d="M1 5l3.5-3.5L8 5" fill="none" stroke="#333" strokeWidth="1.5" /></svg>
          </ScrollArrow>
          <ScrollArrow>
            <svg width="9" height="6"><path d="M1 1l3.5 3.5L8 1" fill="none" stroke="#333" strokeWidth="1.5" /></svg>
          </ScrollArrow>
        </VScroll>
      </Workspace>

      <HScroll>
        <HPad $w={136} />
        <ScrollArrow $w={16}>
          <svg width="6" height="9"><path d="M5 1L1.5 4.5 5 8" fill="none" stroke="#333" strokeWidth="1.5" /></svg>
        </ScrollArrow>
        <HThumb />
        <HTrack />
        <ScrollArrow $w={16}>
          <svg width="6" height="9"><path d="M1 1l3.5 3.5L1 8" fill="none" stroke="#333" strokeWidth="1.5" /></svg>
        </ScrollArrow>
        <HPad $w={18} />
      </HScroll>
      <SelectionBar>
        <SelectionGrip />
        <SelCol $w={100} $ml={6}>
          <SelLabel>Projekt-Rate (Hz)</SelLabel>
          <Combo $white $w={80} $mt={0}><ComboText>44100</ComboText><Chevron /></Combo>
        </SelCol>
        <SelSep $ml={0} />
        <SelCol $w={81} $ml={5}>
          <SelLabel>Einrasten</SelLabel>
          <Combo $w={81} $mt={0}><ComboText>Aus</ComboText><Chevron /></Combo>
        </SelCol>
        <SelSep $ml={6} />
        <SelCol $w={170} $ml={6}>
          <SelLabel>Audioposition</SelLabel>
          <TimeValue w={170} mt={1} groups={timeGroups("00", "00", "00", "000")} />
        </SelCol>
        <SelSep $ml={8} />
        <SelCol $w={298} $ml={5}>
          <Combo $w={291} $mt={0}><ComboText>Start und Ende der Auswahl</ComboText><Chevron /></Combo>
          <TimeRow>
            <TimeValue w={170} groups={timeGroups("00", "00", "00", "000")} />
            <TimeValue w={121} plain arrow={false} groups={timeGroups("00", "00", "17", "190")} />
          </TimeRow>
        </SelCol>
      </SelectionBar>
      <StatusBar>
        <StatusCell>Gestoppt.</StatusCell>
      </StatusBar>

      <Dialog>
        <DialogTitle>
          Bass und Höhe
          <WinButtons>
            <WinBtn $w={46}>
              <svg width="11" height="2"><path d="M0 1h11" stroke="#333" /></svg>
            </WinBtn>
            <WinBtn $w={46}>
              <svg width="11" height="11"><rect x=".5" y=".5" width="10" height="10" fill="none" stroke="#333" /></svg>
            </WinBtn>
            <WinBtn $w={46}>
              <svg width="12" height="12"><path d="M.5.5l11 11M11.5.5l-11 11" stroke="#333" /></svg>
            </WinBtn>
          </WinButtons>
        </DialogTitle>
        <DialogBody>
          <Group $pt={5} $pb={8} $mb={13}>
            <Legend>Klang-Steuerung</Legend>
            <FieldRow>
              <FieldLabel $w={74}>Bass (dB):</FieldLabel>
              <NumberInput readOnly value="3,0" />
              <SliderTrack><DlgThumb pos={55} /></SliderTrack>
            </FieldRow>
            <FieldRow>
              <FieldLabel $w={74}>Höhen (dB):</FieldLabel>
              <NumberInput readOnly value="0,0" />
              <SliderTrack><DlgThumb pos={50} /></SliderTrack>
            </FieldRow>
          </Group>
          <Group $pt={6} $pb={10}>
            <Legend>Ausgabe</Legend>
            <FieldRow>
              <FieldLabel $w={92}>Lautstärke (dB):</FieldLabel>
              <NumberInput readOnly value="0,0" />
              <SliderTrack><DlgThumb pos={50} /></SliderTrack>
            </FieldRow>
            <BindRow>
              <CheckBox />
              Lautstärkeneinstellung an Klangeinstellung binden
            </BindRow>
          </Group>
          <ButtonRow>
            <DlgButton $w={85}>Verwalten</DlgButton>
            <DlgButton $w={120} $ml={8}>Wiedergabe starten</DlgButton>
            <DlgButton $w={122} $ml={3}>Rückwärts springen</DlgButton>
            <DlgButton $w={113} $ml={2}>Vorwärts springen</DlgButton>
            <CheckLabel>
              <CheckBox><Check /></CheckBox>
              Aktivieren
            </CheckLabel>
            <DlgButton $w={85} $ml={55}>Schließen</DlgButton>
            <DlgButton $w={85} $ml={11} $primary>Anwenden</DlgButton>
            <HelpBtn><HelpDot>?</HelpDot></HelpBtn>
          </ButtonRow>
        </DialogBody>
      </Dialog>
      <Cursor width="14" height="22" viewBox="0 0 14 22">
        <path d="M1 1v17l4-4 3 7 2.5-1-3-7h5.5z" fill="#fff" stroke="#222" strokeWidth="1" />
      </Cursor>
    </Page>
  );
}
